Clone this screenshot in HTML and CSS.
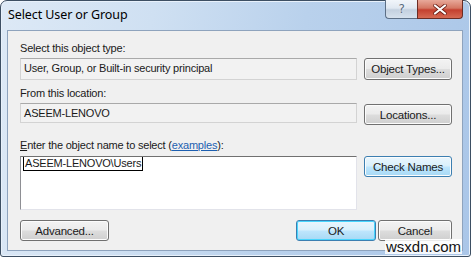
FILE: index.html
```html
<!DOCTYPE html>
<html>
<head>
<meta charset="utf-8">
<link rel="stylesheet" href="styles.css">
</head>
<body>
<div class="window">
  <div class="titlebar">
    <span class="title">Select User or Group</span>
    <div class="caption-buttons">
      <div class="cap help"><span>?</span></div>
      <div class="cap close">
        <svg width="14" height="11" viewBox="0 0 14 11"><path d="M2 1.5 L12 9.5 M12 1.5 L2 9.5" stroke="#6b1d14" stroke-width="3.6" stroke-linecap="round"/><path d="M2 1.5 L12 9.5 M12 1.5 L2 9.5" stroke="#ffffff" stroke-width="2.2" stroke-linecap="round"/></svg>
      </div>
    </div>
  </div>
  <div class="client">
    <div class="label">Select this object type:</div>
    <div class="row">
      <div class="field">User, Group, or Built-in security principal</div>
      <button class="btn">Object Types...</button>
    </div>
    <div class="label l2">From this location:</div>
    <div class="row">
      <div class="field f2">ASEEM-LENOVO</div>
      <button class="btn b2">Locations...</button>
    </div>
    <div class="label l3"><u>E</u>nter the object name to select (<a class="link">examples</a>):</div>
    <div class="row">
      <div class="textarea"><span class="name">ASEEM-LENOVO\Users</span></div>
      <button class="btn hot">Check Names</button>
    </div>
    <div class="footer">
      <button class="btn adv">Advanced...</button>
      <div class="spacer"></div>
      <button class="btn ok">OK</button>
      <button class="btn cancel">Cancel</button>
    </div>
  </div>
  <div class="watermark">wsxdn.com</div>
</div>
</body>
</html>
```
FILE: styles.css
```css
html, body { margin: 0; padding: 0; background: #ffffff; }
body { width: 471px; height: 257px; overflow: hidden; font-family: "Liberation Sans", Arial, sans-serif; font-size: 11px; letter-spacing: -0.2px; color: #1a1a1a; }
.window {
  position: relative;
  box-sizing: border-box;
  width: 471px; height: 257px;
  border: 1px solid #3d4f63;
  border-radius: 7px 7px 3px 3px;
  background: linear-gradient(100deg, #dde9f6 0%, #cfe0f2 30%, #b9d1ec 60%, #aac6e8 100%);
  box-shadow: inset 0 0 0 1px #e8f1fb;
}
.titlebar { height: 29px; display: flex; align-items: flex-start; position: relative; }
.title { margin: 5px 0 0 7px; font-family: "Noto Sans", sans-serif; font-size: 12.5px; letter-spacing: -0.1px; color: #000; }
.caption-buttons { position: absolute; right: 7px; top: -1px; display: flex; }
.cap { height: 19px; box-sizing: border-box; border: 1px solid #5c6f86; border-top: none; display: flex; align-items: center; justify-content: center; }
.help { width: 32px; border-radius: 0 0 0 4px; border-right: none; background: linear-gradient(#f1f5fa 0%, #e0e8f1 45%, #c3d0df 55%, #d6e1ed 100%); }
.help span { font-family: "DejaVu Sans", sans-serif; font-size: 12px; color: #5a6b80; text-shadow: 0 0 2px #fff; }
.close { width: 46px; border-radius: 0 0 4px 0; background: linear-gradient(#e8a99a 0%, #d47763 45%, #c4402f 55%, #d66a53 100%); border-color: #6b2c24; }
.client {
  margin-left: 6px;
  width: 456px; height: 221px;
  box-sizing: border-box;
  border: 1px solid #8ea3bd;
  background: #f0f0f0;
  padding: 10px 10px 0 12px;
  display: flex; flex-direction: column;
}
.label { height: 15px; line-height: 15px; margin-bottom: 2px; white-space: nowrap; }
.l2 { margin-top: 6px; }
.l3 { margin-top: 13px; margin-bottom: 3px; }
.link { color: #1d5fb0; text-decoration: underline; }
.row { display: flex; gap: 7px; align-items: flex-start; }
.field {
  box-sizing: border-box;
  width: 337px; height: 22px;
  border: 1px solid #d3d3d3; border-top-color: #a9a9a9;
  background: #f2f2f2;
  padding: 0 3px; line-height: 19px;
  white-space: nowrap;
}
.f2 { height: 20px; line-height: 18px; }
.textarea {
  box-sizing: border-box;
  width: 337px; height: 54px;
  background: #fff;
  border: 1px solid #e2e3ea; border-top-color: #707070; border-left-color: #8e8f94;
  padding: 0 2px;
}
.name { display: inline-block; border: 1px solid #000; border-top: none; line-height: 13px; padding: 0 1px; }
.btn {
  box-sizing: border-box;
  width: 88px; height: 22px;
  font-family: inherit; font-size: 11.5px; letter-spacing: -0.2px; color: #1a1a1a;
  border: 1px solid #707070; border-radius: 3px;
  background: linear-gradient(#f3f3f3 0%, #ebebeb 48%, #dddddd 52%, #cfcfcf 100%);
  box-shadow: inset 0 0 0 1px #fcfcfc;
  padding: 0; margin: 0;
}
.b2 { margin-top: 1px; height: 21px; }
.hot { height: 21px; border-color: #3c7fb1; background: linear-gradient(#eaf6fd 0%, #d9f0fc 48%, #bee6fd 52%, #a7d9f5 100%); }
.footer { display: flex; margin-top: 10px; gap: 2px; }
.footer .btn { height: 21px; }
.adv { width: 89px; }
.spacer { flex: 1; }
.ok { width: 80px; border-color: #3c7fb1; background: linear-gradient(#eaf6fd 0%, #d9f0fc 48%, #bee6fd 52%, #a7d9f5 100%); box-shadow: inset 0 0 0 1px #48d5fd; }
.cancel { width: 74px; }
.watermark {
  position: absolute; right: 8px; bottom: 2px;
  font-family: "Liberation Sans", sans-serif; font-size: 15px; letter-spacing: 0; color: #111;
  background: rgba(255,255,255,0.85); padding: 0 1px; line-height: 15px;
}
```
